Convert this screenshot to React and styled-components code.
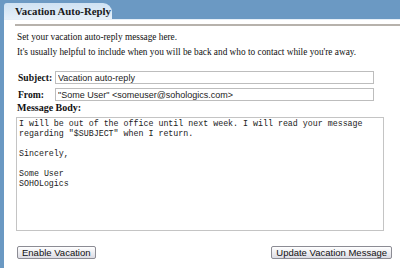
import styled, { createGlobalStyle } from 'styled-components';

const GlobalStyle = createGlobalStyle`
  html, body {
    margin: 0;
    padding: 0;
    background: #ffffff;
  }
  body {
    font-family: "Liberation Serif", "Times New Roman", serif;
  }
`;

const BODY_TEXT = `I will be out of the office until next week. I will read your message
regarding "$SUBJECT" when I return.

Sincerely,

Some User
SOHOLogics`;

export default function App() {
  return (
    <Root>
      <GlobalStyle />
      <Header>
        <Tab>Vacation Auto-Reply</Tab>
      </Header>
      <Panel>
        <Rule />
        <Content>
          <Intro>
            Set your vacation auto-reply message here.
            <br />
            It's usually helpful to include when you will be back and who to contact while you're away.
          </Intro>
          <FieldGrid>
            <Label>Subject:</Label>
            <TextInput defaultValue="Vacation auto-reply" />
            <Label>From:</Label>
            <TextInput defaultValue={'"Some User" <someuser@sohologics.com>'} />
          </FieldGrid>
          <BodyLabel>Message Body:</BodyLabel>
          <MessageArea defaultValue={BODY_TEXT} spellCheck={false} />
          <ButtonRow>
            <Button>Enable Vacation</Button>
            <Button>Update Vacation Message</Button>
          </ButtonRow>
        </Content>
      </Panel>
    </Root>
  );
}

const Root = styled.div`
  width: 400px;
  height: 268px;
  overflow: hidden;
  background: #6b99c3;
  padding-left: 4px;
  box-sizing: border-box;
  display: flex;
  flex-direction: column;
`;

const Header = styled.div`
  height: 19px;
  display: flex;
  align-items: flex-end;
`;

const Tab = styled.div`
  height: 16px;
  width: 108px;
  box-sizing: border-box;
  padding-left: 11px;
  background: linear-gradient(#cfe2f3, #e6f0f9);
  border-radius: 3px 9px 0 0;
  font-weight: bold;
  font-size: 10.8px;
  line-height: 17px;
  color: #1a1a1a;
`;

const Panel = styled.div`
  flex: 1;
  background: #ffffff;
  border-top: 1px solid #e4eef7;
  padding: 4px 0 0 11px;
`;

const Rule = styled.div`
  height: 2px;
  background: #b7b2ac;
`;

const Content = styled.div`
  padding-left: 1px;
`;

const Intro = styled.p`
  margin: 4px 0 0 1px;
  font-size: 9.3px;
  line-height: 15px;
  color: #111;
  white-space: nowrap;
`;

const FieldGrid = styled.div`
  display: grid;
  grid-template-columns: 37px 319px;
  row-gap: 4px;
  align-items: center;
  margin-top: 11px;
  padding-left: 2px;
`;

const Label = styled.span`
  font-weight: bold;
  font-size: 9.6px;
  color: #111;
`;

const TextInput = styled.input`
  height: 13px;
  box-sizing: border-box;
  border: 1px solid #bdbdbd;
  padding: 0 2px;
  font-family: "Liberation Sans", Arial, sans-serif;
  font-size: 9px;
  color: #222;
  outline: none;
`;

const BodyLabel = styled.div`
  margin-top: 1px;
  padding-left: 1px;
  font-weight: bold;
  font-size: 10px;
  line-height: 12px;
  color: #111;
`;

const MessageArea = styled.textarea`
  display: block;
  margin-top: 3px;
  width: 368px;
  height: 114px;
  box-sizing: border-box;
  border: 1px solid #c4c4c4;
  padding: 1px 2px;
  resize: none;
  font-family: "Liberation Mono", "Courier New", monospace;
  font-size: 8.3px;
  line-height: 10px;
  color: #222;
  outline: none;
`;

const ButtonRow = styled.div`
  display: flex;
  justify-content: space-between;
  margin-top: 15px;
  width: 375px;
  padding-left: 1px;
`;

const Button = styled.button`
  height: 13px;
  padding: 0 4px;
  box-sizing: border-box;
  border: 1px solid #8c8c94;
  border-radius: 2px;
  background: linear-gradient(#ffffff, #dcdce4);
  font-family: "Liberation Sans", Arial, sans-serif;
  font-size: 9.5px;
  line-height: 11px;
  color: #111;
`;
